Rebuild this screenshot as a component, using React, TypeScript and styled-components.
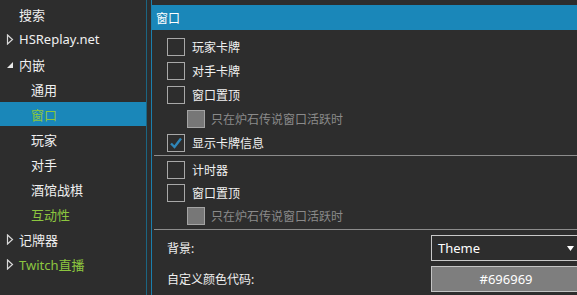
import React from "react";
import styled, { createGlobalStyle } from "styled-components";

const GlobalStyle = createGlobalStyle`
  html, body {
    margin: 0;
    padding: 0;
    background: #2d2d2d;
    overflow: hidden;
  }
  body {
    font-family: "Segoe UI", "Noto Sans", "Noto Sans CJK SC", sans-serif;
    font-size: 12px;
    color: #f0f0f0;
    -webkit-font-smoothing: antialiased;
  }
`;

const Layout = styled.div`
  display: flex;
  width: 577px;
  height: 295px;
  background: #2d2d2d;
  overflow: hidden;
`;

const Sidebar = styled.div`
  width: 146px;
  flex-shrink: 0;
  padding-top: 2px;
  border-right: 1px solid #1b6582;
`;

const TreeRow = styled.div<{ $level: number; $selected?: boolean; $accent?: boolean }>`
  position: relative;
  height: 24px;
  margin-bottom: 1px;
  display: flex;
  align-items: center;
  padding-left: ${({ $level }) => ($level === 0 ? 19 : 31)}px;
  background: ${({ $selected }) => ($selected ? "#1a87b9" : "transparent")};
  color: ${({ $accent, $selected }) => ($accent || $selected ? "#8cc63f" : "#f0f0f0")};
  white-space: nowrap;
  font-size: 13px;
`;

const Expander = styled.svg`
  position: absolute;
  left: 6px;
  top: 7px;
`;

const Splitter = styled.div`
  width: 4px;
  flex-shrink: 0;
`;

const Main = styled.div`
  flex: 1;
  min-width: 0;
  border-left: 1px solid #1b7fae;
  padding-top: 5px;
`;

const Header = styled.div`
  height: 25px;
  background: #1a87b9;
  color: #ffffff;
  display: flex;
  align-items: center;
  padding-left: 4px;
`;

const Group = styled.div<{ $top: number; $bottom: number; $row: number }>`
  padding: ${({ $top }) => $top}px 0 ${({ $bottom }) => $bottom}px 15px;
  & > div {
    height: ${({ $row }) => $row}px;
  }
`;

const CheckRow = styled.div<{ $sub?: boolean; $disabled?: boolean }>`
  display: flex;
  align-items: center;
  gap: ${({ $sub }) => ($sub ? 6 : 7)}px;
  padding-left: ${({ $sub }) => ($sub ? 20 : 0)}px;
  color: ${({ $disabled }) => ($disabled ? "#8a8a8a" : "#f0f0f0")};
`;

const Box = styled.span<{ $disabled?: boolean }>`
  width: 16px;
  height: 16px;
  flex-shrink: 0;
  border: 1px solid ${({ $disabled }) => ($disabled ? "#a4a4a4" : "#a8a8a8")};
  background: ${({ $disabled }) => ($disabled ? "#777777" : "transparent")};
  display: flex;
  align-items: center;
  justify-content: center;
`;

const Separator = styled.div`
  height: 1px;
  background: #8c8c8c;
  margin-left: 2px;
`;

const Form = styled.div`
  display: grid;
  grid-template-columns: 264px 150px;
  row-gap: 5px;
  padding: 5px 0 0 15px;
  align-items: center;
`;

const Label = styled.span`
  color: #f0f0f0;
`;

const Select = styled.div`
  height: 24px;
  border: 1px solid #c8c8c8;
  display: flex;
  align-items: center;
  justify-content: space-between;
  padding: 0 6px 0 6px;
  color: #ffffff;
  font-size: 13px;
`;

const ColorBox = styled.div`
  height: 24px;
  border: 1px solid #c4c4c4;
  background: #7e7e7e;
  display: flex;
  align-items: center;
  justify-content: center;
  color: #ffffff;
  font-size: 13px;
`;

const Collapsed = () => (
  <Expander width="8" height="11" viewBox="0 0 8 11">
    <polygon points="1.5,1 6.5,5.5 1.5,10" fill="none" stroke="#d8d8d8" strokeWidth="1.2" />
  </Expander>
);

const Expanded = () => (
  <Expander width="8" height="11" viewBox="0 0 8 11">
    <polygon points="7,3 7,9 1,9" fill="#e8e8e8" />
  </Expander>
);

const Check = ({ label, checked, sub, disabled }: { label: string; checked?: boolean; sub?: boolean; disabled?: boolean }) => (
  <CheckRow $sub={sub} $disabled={disabled}>
    <Box $disabled={disabled}>
      {checked && (
        <svg width="14" height="14" viewBox="0 0 14 14">
          <path d="M2 7.5 L5.5 11 L12 2.5" fill="none" stroke="#2f86b8" strokeWidth="2.4" />
        </svg>
      )}
    </Box>
    <span>{label}</span>
  </CheckRow>
);

export default function App() {
  return (
    <Layout>
      <GlobalStyle />
      <Sidebar>
        <TreeRow $level={0}>搜索</TreeRow>
        <TreeRow $level={0}>
          <Collapsed />
          HSReplay.net
        </TreeRow>
        <TreeRow $level={0}>
          <Expanded />
          内嵌
        </TreeRow>
        <TreeRow $level={1}>通用</TreeRow>
        <TreeRow $level={1} $selected>窗口</TreeRow>
        <TreeRow $level={1}>玩家</TreeRow>
        <TreeRow $level={1}>对手</TreeRow>
        <TreeRow $level={1}>酒馆战棋</TreeRow>
        <TreeRow $level={1} $accent>互动性</TreeRow>
        <TreeRow $level={0}>
          <Collapsed />
          记牌器
        </TreeRow>
        <TreeRow $level={0} $accent>
          <Collapsed />
          Twitch直播
        </TreeRow>
      </Sidebar>
      <Splitter />
      <Main>
        <Header>窗口</Header>
        <Group $top={5} $bottom={0} $row={24}>
          <Check label="玩家卡牌" />
          <Check label="对手卡牌" />
          <Check label="窗口置顶" />
          <Check label="只在炉石传说窗口活跃时" sub disabled />
          <Check label="显示卡牌信息" checked />
        </Group>
        <Separator />
        <Group $top={2} $bottom={2} $row={23}>
          <Check label="计时器" />
          <Check label="窗口置顶" />
          <Check label="只在炉石传说窗口活跃时" sub disabled />
        </Group>
        <Separator />
        <Form>
          <Label>背景:</Label>
          <Select>
            <span>Theme</span>
            <svg width="7" height="5" viewBox="0 0 7 5">
              <polygon points="0,0 7,0 3.5,5" fill="#ffffff" />
            </svg>
          </Select>
          <Label>自定义颜色代码:</Label>
          <ColorBox>#696969</ColorBox>
        </Form>
      </Main>
    </Layout>
  );
}
